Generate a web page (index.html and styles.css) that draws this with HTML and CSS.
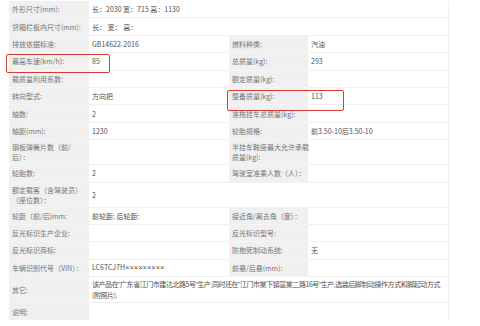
FILE: index.html
```html
<!DOCTYPE html>
<html lang="zh-CN">
<head>
<meta charset="utf-8">
<title>车辆参数</title>
<link rel="stylesheet" href="styles.css">
</head>
<body>
<div class="sheet">
  <table class="params">
    <colgroup>
      <col class="c-label"><col class="c-value"><col class="c-label2"><col class="c-value">
    </colgroup>
    <tbody>
      <tr><td class="lb">外形尺寸(mm):</td><td class="val" colspan="3">长：2030 宽：715 高：1130</td></tr>
      <tr><td class="lb">货箱栏板内尺寸(mm):</td><td class="val" colspan="3">长： 宽： 高：</td></tr>
      <tr><td class="lb">排放依据标准:</td><td class="val">GB14622-2016</td><td class="lb">燃料种类:</td><td class="val">汽油</td></tr>
      <tr><td class="lb">最高车速(km/h):</td><td class="val">85</td><td class="lb">总质量(kg):</td><td class="val">293</td></tr>
      <tr><td class="lb">载质量利用系数:</td><td class="val"></td><td class="lb">额定质量(kg):</td><td class="val"></td></tr>
      <tr><td class="lb">转向型式:</td><td class="val">方向把</td><td class="lb">整备质量(kg):</td><td class="val">113</td></tr>
      <tr><td class="lb">轴数:</td><td class="val">2</td><td class="lb">准拖挂车总质量(kg):</td><td class="val"></td></tr>
      <tr><td class="lb">轴距(mm):</td><td class="val">1230</td><td class="lb">轮胎规格:</td><td class="val">前3.50-10后3.50-10</td></tr>
      <tr class="tall"><td class="lb">钢板弹簧片数（前/<br>后）：</td><td class="val"></td><td class="lb">半挂车鞍座最大允许承载<br>质量(kg):</td><td class="val"></td></tr>
      <tr><td class="lb">轮胎数:</td><td class="val">2</td><td class="lb">驾驶室准乘人数（人）：</td><td class="val"></td></tr>
      <tr class="tall"><td class="lb">额定载客（含驾驶员）<br>（座位数）：</td><td class="val" colspan="3">2</td></tr>
      <tr><td class="lb">轮距（前/后)mm:</td><td class="val">前轮距: 后轮距:</td><td class="lb">接近角/离去角（度）：</td><td class="val"></td></tr>
      <tr><td class="lb">反光标识生产企业:</td><td class="val"></td><td class="lb">反光标识型号:</td><td class="val"></td></tr>
      <tr><td class="lb">反光标识商标:</td><td class="val"></td><td class="lb">防抱死制动系统:</td><td class="val">无</td></tr>
      <tr><td class="lb">车辆识别代号（VIN）：</td><td class="val">LC6TCJ7H<span class="latin x">×××××××××</span></td><td class="lb">前悬/后悬(mm):</td><td class="val"></td></tr>
      <tr class="tall"><td class="lb">其它:</td><td class="val note" colspan="3">该产品在<span class="latin">"</span>广东省江门市建达北路5号<span class="latin">"</span>生产<span class="latin">,</span>同时还在<span class="latin">"</span>江门市棠下镇富棠二路16号<span class="latin">"</span>生产<span class="latin">;</span>选装后脚制动操作方式和脚起动方式<br>(附照片).</td></tr>
      <tr class="last"><td class="lb">说明:</td><td class="val" colspan="3"></td></tr>
    </tbody>
  </table>
  <div class="mark mark-speed"></div>
  <div class="mark mark-weight"></div>
</div>
</body>
</html>
```

FILE: styles.css
```css
html, body {
  margin: 0;
  padding: 0;
  background: #ffffff;
}

.sheet {
  position: relative;
  width: 480px;
  height: 326px;
  overflow: hidden;
  padding: 1px 0 0 9px;
  box-sizing: border-box;
  font-family: "Noto Sans CJK SC", "Noto Sans", sans-serif;
  font-size: 7px;
  line-height: 10px;
}

.params {
  width: 439px;
  table-layout: fixed;
  border-collapse: separate;
  border-spacing: 0;
  border-right: 1px solid #f1f1f1;
}

.c-label { width: 80px; }
.c-label2 { width: 79px; }
.c-value { width: 140px; }

.params tr { height: 17.4px; }
.params tr.tall { height: 25px; }

.params td {
  padding: 2px 3px 2px 3px;
  vertical-align: middle;
  border-bottom: 1px solid #efefef;
  white-space: nowrap;
  overflow: visible;
}

.params td.lb {
  background: #f0f0f0;
  color: #747474;
  border-bottom-color: #f5f5f5;
}

.params td.val {
  background: #ffffff;
  color: #505050;
}

.params td.note {
  letter-spacing: -0.45px;
}

.latin {
  font-family: "Liberation Sans", sans-serif;
  font-size: 6.5px;
}

.latin.x {
  font-size: 7.5px;
}

.params tr.last td { border-bottom: none; }

.mark {
  position: absolute;
  border: 1.5px solid #d23a32;
  border-radius: 2px;
  box-sizing: border-box;
}

.mark-speed {
  left: 6px;
  top: 54px;
  width: 104px;
  height: 19px;
}

.mark-weight {
  left: 227px;
  top: 90px;
  width: 117px;
  height: 21px;
}
```
